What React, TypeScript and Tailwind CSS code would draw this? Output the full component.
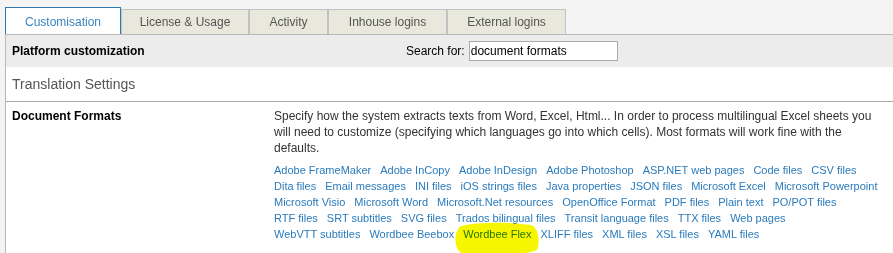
import React from "react";

const tabs = [
  { label: "Customisation", w: "w-[116px]" },
  { label: "License & Usage", w: "w-[128px]" },
  { label: "Activity", w: "w-[79px]" },
  { label: "Inhouse logins", w: "w-[119px]" },
  { label: "External logins", w: "w-[119px]" },
];

// grouped by line, as laid out in the panel
const formatRows = [
  ["Adobe FrameMaker", "Adobe InCopy", "Adobe InDesign", "Adobe Photoshop", "ASP.NET web pages", "Code files", "CSV files"],
  ["Dita files", "Email messages", "INI files", "iOS strings files", "Java properties", "JSON files", "Microsoft Excel", "Microsoft Powerpoint"],
  ["Microsoft Visio", "Microsoft Word", "Microsoft.Net resources", "OpenOffice Format", "PDF files", "Plain text", "PO/POT files"],
  ["RTF files", "SRT subtitles", "SVG files", "Trados bilingual files", "Transit language files", "TTX files", "Web pages"],
  ["WebVTT subtitles", "Wordbee Beebox", "Wordbee Flex", "XLIFF files", "XML files", "XSL files", "YAML files"],
];

export default function App() {
  return (
    <div className="relative h-[253px] w-full overflow-hidden bg-[#f4f4f4] pt-[7px] font-['Liberation_Sans',Arial,sans-serif] text-[12px] text-[#222]">
      {/* tabs */}
      <div className="flex h-[27px] items-end pl-[5px]">
        {tabs.map((t, i) =>
          i === 0 ? (
            <div
              key={t.label}
              className={`flex h-[27px] items-center justify-center border-x border-t border-[#2a7ab8] bg-white pt-[1px] text-[#3a83bd] ${t.w}`}
            >
              {t.label}
            </div>
          ) : (
            <div
              key={t.label}
              className={`flex h-[25px] items-center justify-center border-x border-t border-[#c2c2c2] bg-[#e9e8dc] text-[#555] ${t.w}`}
            >
              {t.label}
            </div>
          )
        )}
      </div>

      {/* panel */}
      <div className="ml-[5px] border-l border-t border-[#b9b9b9]">
        <div className="flex h-[32px] items-center bg-[#ececec] pl-[6px]">
          <div className="w-[394px] font-bold text-black">Platform customization</div>
          <span className="mr-[4px] text-black">Search for:</span>
          <input
            readOnly
            value="document formats"
            className="h-[20px] w-[149px] border border-[#aaa] bg-white px-[1px] text-[12px] text-black outline-none"
          />
        </div>

        <div className="flex h-[35px] items-center border-b border-[#aaa] bg-white pl-[6px] text-[14px] text-[#555]">
          Translation Settings
        </div>

        <div className="grid h-[200px] grid-cols-[262px_1fr] bg-white pl-[6px] pr-[11px] pt-[6px]">
          <div className="font-bold leading-[16px] text-black">Document Formats</div>
          <div>
            <p className="leading-[16px] text-[#333]">
              Specify how the system extracts texts from Word, Excel, Html... In order to process multilingual Excel
              sheets you will need to customize (specifying which languages go into which cells). Most formats will
              work fine with the defaults.
            </p>
            <div className="mt-[6px] text-[11px] leading-[16px]">
              {formatRows.map((row, r) => (
                <div key={r} className="flex gap-x-[9px] whitespace-nowrap">
                  {row.map((f) => (
                    <a key={f} href="#" className="text-[#2b7bbc]">
                      {f}
                    </a>
                  ))}
                </div>
              ))}
            </div>
          </div>
        </div>
      </div>

      {/* highlighter mark */}
      <svg
        className="pointer-events-none absolute left-[453px] top-[222px] mix-blend-multiply"
        width="88"
        height="34"
        viewBox="0 0 88 34"
      >
        <path
          d="M8 4 C24 0, 58 0, 78 3 C86 6, 87 20, 84 28 C70 34, 26 34, 8 31 C1 26, 0 10, 8 4 Z"
          fill="#f6f600"
        />
      </svg>
    </div>
  );
}
